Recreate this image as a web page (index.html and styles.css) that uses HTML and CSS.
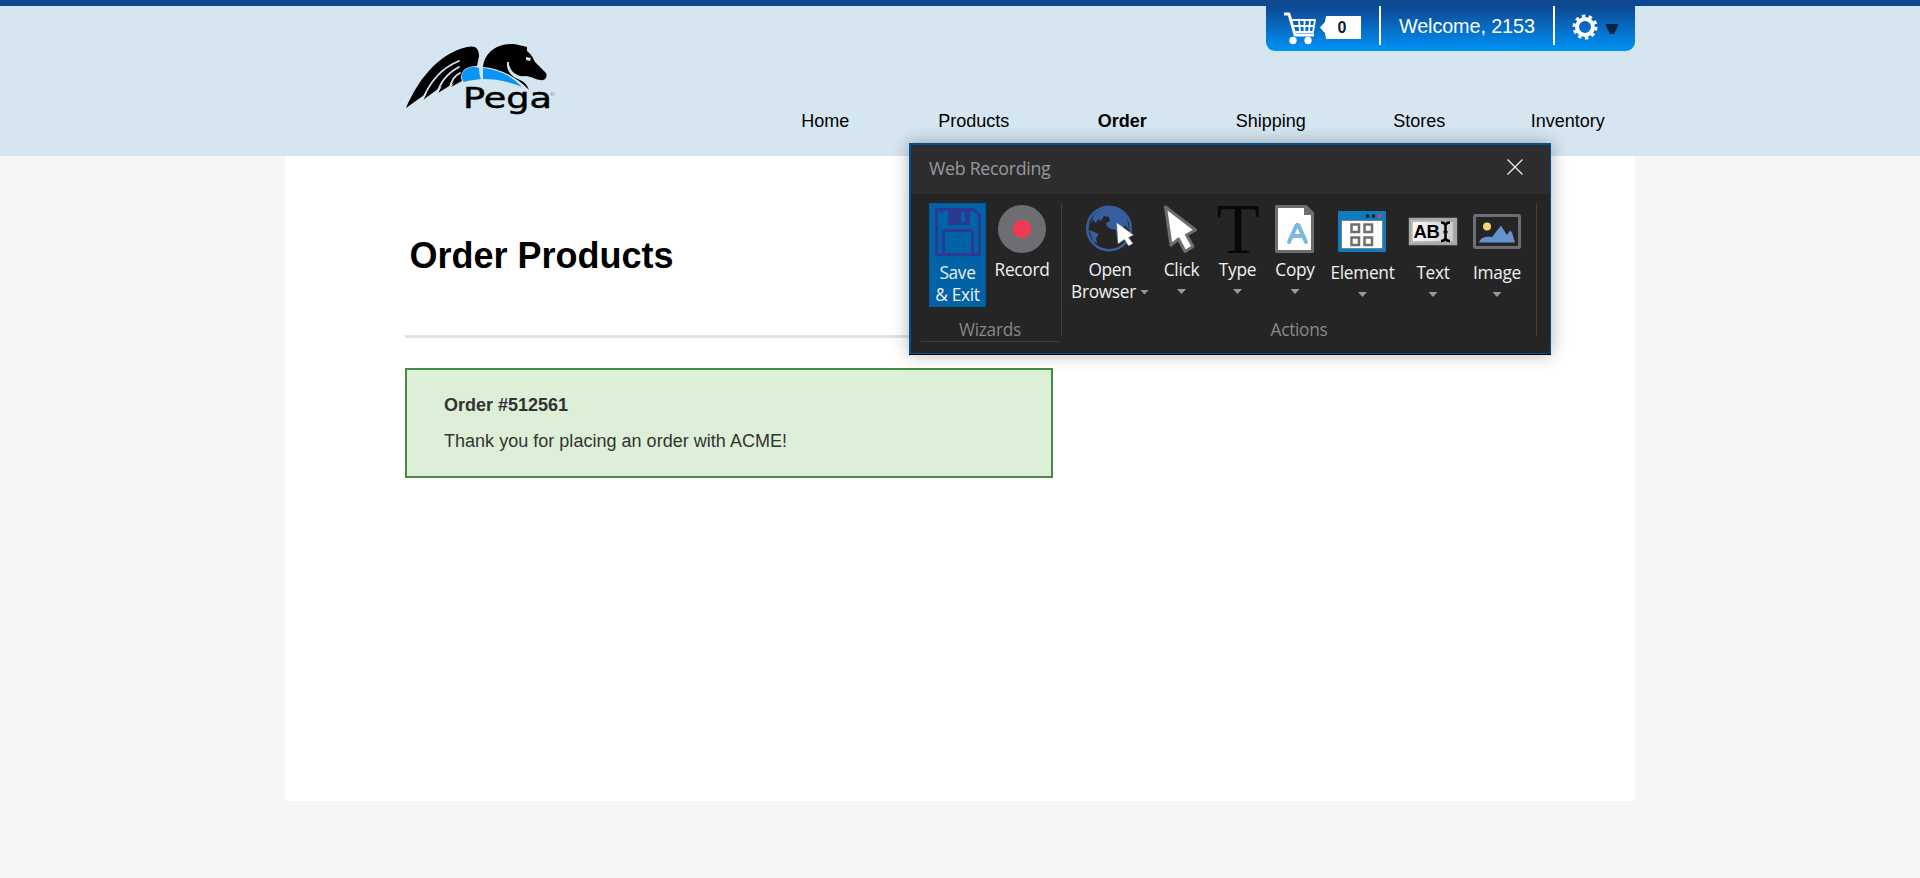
FILE: index.html
```html
<!DOCTYPE html>
<html lang="en">
<head>
<meta charset="utf-8">
<title>Order Products</title>
<link rel="stylesheet" href="styles.css">
</head>
<body>
<header class="site-header">
  <div class="header-inner">
    <svg class="logo" viewBox="0 0 150 72" width="150" height="72">
      <path d="M1 64C12 38 32 10 62 3C70 1 74 4 74 12L72 22C62 22 56 26 56 34L57 37L46 43L49 39L33 49L37 42L18 56L22 49Z"/>
      <path d="M17 57C25 37 36 24 54 17M32 50C35 38 43 29 54 23M45 44C46 37 49 32 55 29" fill="none" stroke="#d5e6f1" stroke-width="1.800" stroke-linecap="round"/>
      <path d="M78 23C80 7 93 0 107 0C112 0 117 2 122 3L122 7C127 11 128 14 130 18L141 29C143 34 139 37 136 36C131 36 126 32 120 32C114 33 110 30 107 27C105 24 104 21 103 18C102 26 106 32 113 35C120 38 122 41 124 46C111 32 93 24 78 23Z"/>
      <path d="M121 13l5 1-1 3-4-1z" fill="#d5e6f1"/>
      <path d="M103 18C102 26 107 32 116 35" fill="none" stroke="#d5e6f1" stroke-width="1.800"/>
      <path d="M59 27C63 23 69 22 74 24C74 29 75 33 76 35C70 36 65 36 59 38C56 34 56 30 59 27ZM78 24C96 26 108 33 117 43C103 37 90 35 78 35Z" fill="#0a93f8"/>
      <text x="58" y="64" class="logo-word" textLength="89" lengthAdjust="spacingAndGlyphs">Pega</text>
      <circle cx="147.500" cy="50" r="1.500" fill="none" stroke="#78838c" stroke-width=".6"/>
    </svg>
    <div class="header-right">
      <div class="user-bar">
        <div class="cart">
          <svg width="34" height="34" viewBox="0 0 34 34" fill="none" stroke="#fff" stroke-width="1.800" stroke-linejoin="round">
            <path d="M0 2h5l6 21h19" stroke-width="2.800"/>
            <path d="M7 8h24l-2 12H11M9 14h21M15 8l1 12M20.500 8v12M26 8l-1 12"/>
            <circle cx="9" cy="28.500" r="3.700" fill="#fff" stroke="none"/><circle cx="24" cy="28.500" r="3.700" fill="#fff" stroke="none"/>
          </svg>
          <span class="cart-count">0</span>
        </div>
        <div class="welcome">Welcome, 2153</div>
        <div class="settings">
          <svg width="26" height="26" viewBox="-13 -13 26 26" fill="none" stroke="#fff">
            <circle r="8" stroke-width="4"/>
            <circle r="11" stroke-width="3" stroke-dasharray="3.456 3.456"/>
          </svg>
          <svg width="12" height="11" viewBox="0 0 12 11"><path d="M0 0h12v2L8 10H4L0 2z" fill="#0d2146"/></svg>
        </div>
      </div>
      <nav class="nav">
        <a>Home</a><a>Products</a><a class="active">Order</a><a>Shipping</a><a>Stores</a><a>Inventory</a>
      </nav>
    </div>
  </div>
</header>
<main class="page">
  <h1>Order Products</h1>
  <section class="notice">
    <strong>Order #512561</strong>
    <p>Thank you for placing an order with ACME!</p>
  </section>
</main>

<section class="dialog">
  <div class="dialog-title">
    <span class="dialog-name">Web Recording</span>
    <svg width="16" height="16" viewBox="0 0 16 16"><path d="M.5.5l15 15M15.500.5l-15 15" stroke="#eee" stroke-width="1.300"/></svg>
  </div>
  <div class="ribbon">
    <div class="group wizards">
      <div class="tools">
        <div class="tool save">
          <svg width="46" height="48" viewBox="0 0 46 48" fill="none" stroke="#2b3990" stroke-width="3" stroke-linejoin="round">
            <path d="M1.500 1.500H39L44.500 7V46.500H1.500ZM8.500 46V25q0-2.500 2.500-2.500h24q2.500 0 2.500 2.500V46"/>
            <path d="M13 1H35V17H13Z" fill="#2b3990" stroke="none"/>
            <path d="M26 4h4v10h-4z" fill="#0063a8" stroke="none"/><path d="M4 3h5L6 6z" fill="#2b3990" stroke="none"/>
          </svg>
          <span>Save</span><span>&amp; Exit</span>
        </div>
        <div class="tool record">
          <svg width="48" height="48" viewBox="0 0 48 48"><circle cx="24" cy="24" r="24" fill="#6d6e71"/><circle cx="24" cy="24" r="9.300" fill="#ef3a54"/></svg>
          <span>Record</span>
        </div>
      </div>
      <div class="group-name">Wizards</div>
    </div>
    <div class="group actions">
      <div class="tools">
        <div class="tool">
          <svg width="48" height="48" viewBox="0 0 48 48">
            <circle cx="23" cy="23.500" r="21.700" fill="none" stroke="#375f9f" stroke-width="2.600"/>
            <path d="M8 10C17-1 35 0 41 13L43 25L39 20L37 24L34 36L31 34L30 25C25 24 20 23 20 18L24 16L23 12L18 11L15 16L12 14L10 18L7 15L4 20ZM3 25L13 29L10 33L11 38L7 36Z" fill="#375f9f"/>
            <path d="M30.500 17.500L47.500 30L42.500 32.500L47 38.500L42.500 41L38.500 34.500L32 39Z" fill="#fff" stroke="#69717e" stroke-width=".6"/>
          </svg>
          <span>Open</span><span class="with-arrow">Browser<i class="arrow"></i></span>
        </div>
        <div class="tool">
          <svg width="34" height="48" viewBox="0 0 34 48"><path d="M.5 2L30.500 25L21.500 30L28 41.500L20 46.500L13.500 34L6 40Z" fill="#fff" stroke="#6d6e71" stroke-width="3" stroke-linejoin="round"/></svg>
          <span>Click</span><i class="arrow"></i>
        </div>
        <div class="tool">
          <svg width="46" height="48" viewBox="0 0 46 48"><text x="1.500" y="48" class="type-icon" textLength="43" lengthAdjust="spacingAndGlyphs">T</text></svg>
          <span>Type</span><i class="arrow"></i>
        </div>
        <div class="tool">
          <svg class="nudge" width="39" height="48" viewBox="0 0 39 48">
            <path d="M1.500 1.500H31L37.500 8V46.500H1.500Z" fill="#fff" stroke="#6d6e71" stroke-width="3" stroke-linejoin="round"/><path d="M29 1H32L38 8V10H29Z" fill="#6d6e71"/>
            <path d="M14 37L21.500 20.500Q22.500 18.800 23.500 20.500L31 37M17 31H28" fill="none" stroke="#7ab8df" stroke-width="4" stroke-linecap="round"/>
          </svg>
          <span>Copy</span><i class="arrow"></i>
        </div>
        <div class="tool">
          <svg class="nudge" width="48" height="51" viewBox="0 0 48 51">
            <rect y="6" width="48" height="41" rx="1" fill="#0e7cbf"/><path d="M3 15H45V44H3Z" fill="#77828a"/><path d="M4 16H44V43H4Z" fill="#fff"/>
            <circle cx="29.500" cy="11" r="1.900" fill="#222"/><circle cx="35.500" cy="11" r="1.900" fill="#222"/><circle cx="41.500" cy="11" r="1.900" fill="#ef3a54"/>
            <path d="M13.500 19.500h7.500v7.500h-7.500zM26.500 19.500h7.500v7.500h-7.500zM13.500 32.500h7.500v7.500h-7.500zM26.500 32.500h7.500v7.500h-7.500z" fill="#fff" stroke="#6d6e71" stroke-width="2.500"/>
          </svg>
          <span>Element</span><i class="arrow"></i>
        </div>
        <div class="tool">
          <svg width="48" height="51" viewBox="0 0 48 51">
            <defs><linearGradient id="field"><stop offset="0" stop-color="#fff"/><stop offset="1" stop-color="#c8c8cb"/></linearGradient></defs>
            <path d="M1 14H47V39H1Z" fill="url(#field)" stroke="#a7a8a3" stroke-width="2.400"/><path d="M3 16H45V37H3Z" fill="none" stroke="#88898a"/>
            <text x="4.500" y="33" class="field-icon" textLength="26" lengthAdjust="spacingAndGlyphs">AB</text>
            <path d="M32 17.500Q36 17.500 36.500 20.500Q37 17.500 41 17.500M36.500 20V34M32 36Q36 36 36.500 33Q37 36 41 36M34.500 27h4" fill="none" stroke="#000" stroke-width="2.500"/>
          </svg>
          <span>Text</span><i class="arrow"></i>
        </div>
        <div class="tool">
          <svg width="48" height="51" viewBox="0 0 48 51">
            <rect x="1.500" y="10.500" width="45" height="32" rx="1" fill="#252525" stroke="#6d6e71" stroke-width="3"/>
            <circle cx="14" cy="21.500" r="4" fill="#f2d774"/><path d="M6 37.500C8 32 13 31 19 32L28 20.500L34 30L37 25.500L39 27.500L42 37.500Z" fill="#6592cf"/>
          </svg>
          <span>Image</span><i class="arrow"></i>
        </div>
      </div>
      <div class="group-name">Actions</div>
    </div>
  </div>
</section>
</body>
</html>
```
FILE: styles.css
```css
* { box-sizing: border-box; }
body {
  margin: 0;
  height: 878px;
  overflow: hidden;
  background: #f6f6f6;
  font: 18px/36px "Liberation Sans", Arial, sans-serif;
  color: #000;
}
svg { display: block; flex: none; overflow: visible; }
.site-header { height: 156px; border-top: 6px solid #0d4890; background: #d5e6f1; }
.header-inner { width: 1350px; margin: 0 auto; display: flex; justify-content: space-between; }
.logo { margin: 38px 0 0 120px; }
.logo-word { font: 28px "DejaVu Sans", sans-serif; stroke: #000; stroke-width: .5; }
.header-right { display: flex; flex-direction: column; align-items: flex-end; }
.user-bar {
  display: flex;
  width: 369px;
  height: 45px;
  border-radius: 0 0 9px 9px;
  background: linear-gradient(#0d4890, #0092f8);
}
.cart, .welcome { height: 39px; border-right: 2px solid #fff; }
.cart { display: flex; width: 115px; padding: 6px 0 0 18px; }
.cart-count {
  width: 41px;
  height: 23px;
  margin: 4px 0 0 2px;
  padding-left: 3px;
  background: #fff;
  clip-path: polygon(0 50%, 5px 25%, 6px 0, 100% 0, 100% 100%, 6px 100%, 5px 75%);
  color: #0a1a3c;
  font: bold 16px/23px "Liberation Sans", Arial, sans-serif;
  text-align: center;
}
.welcome { width: 174px; padding-left: 18px; color: #fff; font-size: 19.8px; line-height: 40px; letter-spacing: -.1px; white-space: nowrap; }
.settings { display: flex; gap: 8px; padding: 8px 0 0 17px; }
.settings svg + svg { margin-top: 10px; }
.nav { display: grid; grid-template-columns: repeat(6, 148.500px); margin: 52px -7px 0 0; text-align: center; }
.active { font-weight: bold; }

.page { width: 1350px; height: 645px; margin: 0 auto; padding: 0 120px; background: #fff; }
h1 { height: 182px; margin: 0; padding: 80px 0 0 4.500px; border-bottom: 3px solid #e3e3e3; font-size: 36px; line-height: 40px; }
.notice {
  width: 648px;
  height: 110px;
  margin-top: 30px;
  padding: 17px 37px;
  border: 2px solid #478a4a;
  background: #ddefd7;
  color: #333;
}
.notice strong { display: block; }
.notice p { margin: 0; letter-spacing: .02px; }

.dialog {
  position: absolute;
  left: 909px;
  top: 143px;
  width: 642px;
  height: 211px;
  border: 2px solid #00508f;
  border-width: 2px 1px 1px 2px;
  background: #252525;
  box-shadow: 0 1px 0 #000, 0 0 16px rgba(0, 0, 0, .32);
  color: #f1f1f1;
  font: 17.3px/22px "Open Sans", "Noto Sans", sans-serif;
  letter-spacing: -.3px;
}
.dialog-title { display: flex; justify-content: space-between; height: 49px; padding: 14px 27px 0 18px; background: #2d2d30; color: #999; }
.dialog-name { margin-top: -2px; font-size: 17.8px; }
.ribbon { display: flex; padding: 9px 0 0 10px; }
.group { height: 133px; border-right: 1.500px solid #3f3f46; }
.wizards { width: 141px; }
.actions { width: 475px; }
.tools { display: flex; height: 116px; }
.wizards .tools { padding-left: 8px; }
.actions .tools { display: grid; grid-template-columns: 80px 63px 49px 66px 69px 72px 56px; padding-left: 8px; }
.tool { display: flex; flex-direction: column; align-items: center; padding-top: 2px; white-space: nowrap; }
.tool svg { margin-bottom: 6px; }
.tool .nudge { margin-right: 1px; }
.save { width: 57px; height: 104px; padding-top: 5px; background: #0063a8; box-shadow: inset 0 0 0 1px #005a99; }
.record { width: 64px; margin-left: 4px; }
.with-arrow { display: flex; align-items: center; gap: 4px; }
.arrow { width: 9px; height: 5px; margin-top: 8px; background: #999; clip-path: polygon(0 0, 100% 0, 50% 100%); }
.with-arrow .arrow { margin-top: 0; }
.group-name { height: 22px; color: #888; text-align: center; }
.wizards .group-name { width: 138px; height: 23px; border-bottom: 1.500px solid #3f3f42; }
.type-icon { font: 72px "Liberation Serif", serif; fill: #080808; }
.field-icon { font: bold 18px "Liberation Sans", sans-serif; }
```
